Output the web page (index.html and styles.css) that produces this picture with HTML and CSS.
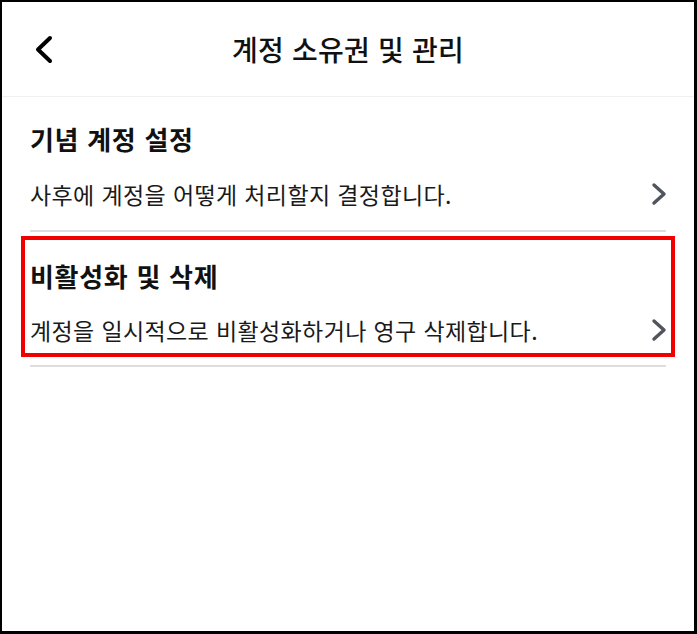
FILE: index.html
```html
<!DOCTYPE html>
<html lang="ko">
<head>
<meta charset="utf-8">
<link rel="stylesheet" href="styles.css">
</head>
<body>
<div class="frame">
  <header class="topbar">
    <div class="back">
      <svg width="20" height="30" viewBox="0 0 20 30"><polyline points="15,3 3,14.5 15,26" fill="none" stroke="#000" stroke-width="4" stroke-linecap="round" stroke-linejoin="round"/></svg>
    </div>
    <h1 class="title">계정 소유권 및 관리</h1>
    <div></div>
  </header>
  <div class="list">
    <div class="item first">
      <div class="item-title">기념 계정 설정</div>
      <div class="item-row">
        <span class="item-desc">사후에 계정을 어떻게 처리할지 결정합니다.</span>
        <svg class="chev" width="16" height="24" viewBox="0 0 16 24"><polyline points="3,3 13,12 3,21" fill="none" stroke="#50545c" stroke-width="3.4" stroke-linecap="round" stroke-linejoin="round"/></svg>
      </div>
    </div>
    <div class="divider"></div>
    <div class="item marked">
      <div class="item-title">비활성화 및 삭제</div>
      <div class="item-row">
        <span class="item-desc">계정을 일시적으로 비활성화하거나 영구 삭제합니다.</span>
        <svg class="chev" width="16" height="24" viewBox="0 0 16 24"><polyline points="3,3 13,12 3,21" fill="none" stroke="#50545c" stroke-width="3.4" stroke-linecap="round" stroke-linejoin="round"/></svg>
      </div>
    </div>
    <div class="divider last"></div>
  </div>
</div>
</body>
</html>
```
FILE: styles.css
```css
* { box-sizing: border-box; }
html, body { margin: 0; padding: 0; background: #fff; }
body { font-family: "Noto Sans CJK KR", "Noto Sans", sans-serif; color: #111; }
.frame {
  width: 697px;
  height: 634px;
  border-style: solid;
  border-color: #000;
  border-width: 2px 3px 3px 2px;
  background: #fff;
  overflow: hidden;
}
.topbar {
  height: 95px;
  border-bottom: 1px solid #f0f0f0;
  display: grid;
  grid-template-columns: 1fr auto 1fr;
  align-items: center;
}
.back { padding-left: 33px; display: flex; align-items: center; padding-top: 2px; }
.title {
  margin: 0;
  font-size: 28px;
  font-weight: 500;
  line-height: 34px;
  color: #111;
  letter-spacing: 0.2px;
}
.list { padding: 0 28px; }
.item-title {
  font-size: 26px;
  font-weight: 700;
  line-height: 32px;
  color: #111;
  letter-spacing: 0.7px;
}
.item-row {
  display: flex;
  justify-content: space-between;
  align-items: center;
  height: 32px;
}
.item-desc {
  font-size: 23px;
  line-height: 32px;
  color: #1a1a1a;
  letter-spacing: 0.38px;
}
.chev { margin-right: -1px; }
.item.first { padding: 26px 0 20px; }
.item.first .item-row { margin-top: 23px; }
.item.marked {
  margin: 4px -9px 0;
  border: 4px solid #f00000;
  padding: 20px 5px 7px;
}
.item.marked .item-row { margin-top: 22px; }
.divider { height: 2px; background: #dcdde0; }
.divider.last { margin-top: 8px; }
```
